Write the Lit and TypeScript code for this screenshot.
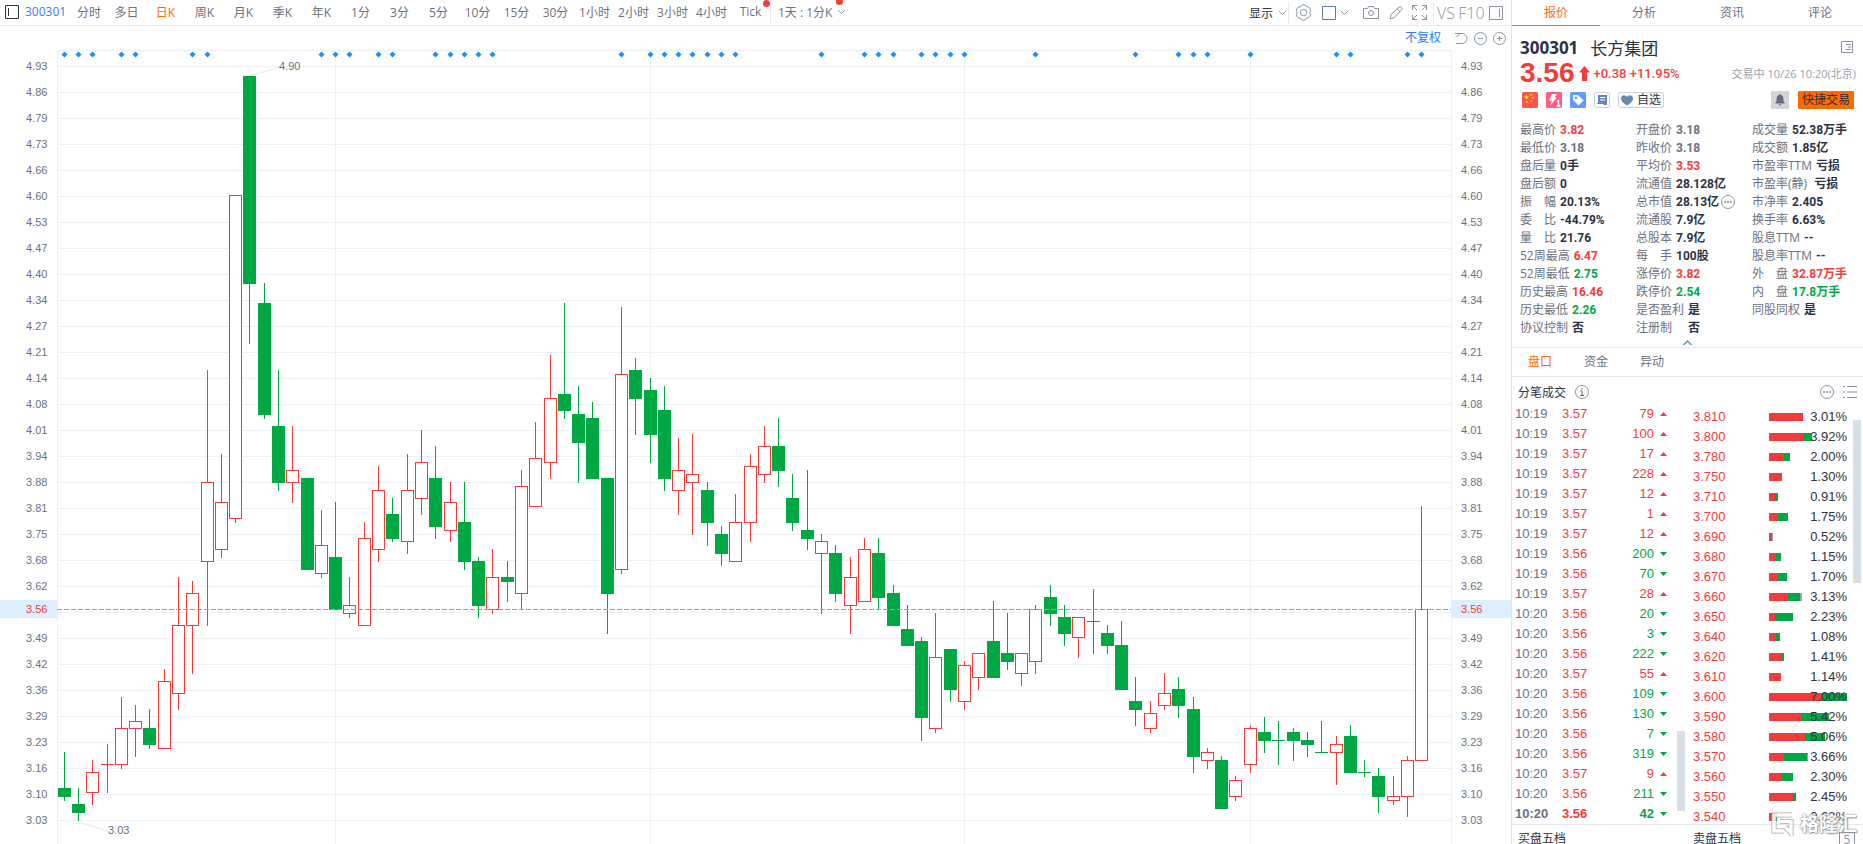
import { LitElement, html, svg, css } from "lit";
import { customElement, state } from "lit/decorators.js";
import { classMap } from "lit/directives/class-map.js";

/* Candles: [direction, wick top, body top, body bottom, wick bottom] in canvas units. */
type Candle = ["u" | "d", number, number, number, number];
const CANDLES: Candle[] = [
  ["d", 752, 788, 797, 801], ["d", 788, 804, 813, 821], ["u", 760, 772, 793, 805], ["u", 744, 764, 765, 793],
  ["u", 697, 728, 765, 769], ["u", 705, 721, 729, 757], ["d", 709, 728, 745, 749], ["u", 669, 681, 749, 749],
  ["u", 577, 625, 694, 710], ["u", 581, 593, 626, 674], ["u", 370, 482, 562, 626], ["u", 454, 502, 550, 558],
  ["u", 195, 195, 519, 523], ["d", 76, 76, 284, 344], ["d", 283, 303, 415, 419], ["d", 370, 426, 483, 491],
  ["u", 426, 470, 483, 503], ["d", 478, 478, 570, 570], ["u", 510, 545, 574, 578], ["d", 502, 557, 610, 610],
  ["u", 577, 605, 614, 618], ["u", 522, 538, 626, 626], ["u", 466, 490, 550, 562], ["d", 498, 514, 539, 542],
  ["u", 454, 490, 542, 554], ["u", 430, 462, 499, 515], ["d", 446, 478, 527, 539], ["u", 482, 502, 531, 542],
  ["d", 482, 522, 562, 570], ["d", 557, 561, 606, 618], ["u", 549, 577, 610, 614], ["d", 561, 577, 582, 602],
  ["u", 470, 486, 594, 609], ["u", 422, 458, 507, 507], ["u", 355, 398, 463, 479], ["d", 303, 394, 411, 419],
  ["d", 386, 414, 443, 483], ["d", 402, 418, 479, 479], ["d", 478, 478, 594, 634], ["u", 307, 374, 570, 574],
  ["d", 358, 370, 399, 435], ["d", 378, 390, 435, 463], ["d", 386, 410, 479, 491], ["u", 438, 470, 491, 515],
  ["u", 434, 474, 483, 535], ["d", 482, 490, 523, 546], ["d", 526, 534, 554, 566], ["u", 494, 522, 562, 562],
  ["u", 454, 466, 523, 542], ["u", 426, 446, 475, 483], ["d", 418, 446, 471, 487], ["d", 474, 498, 523, 531],
  ["d", 470, 530, 539, 550], ["u", 534, 541, 554, 614], ["d", 545, 553, 594, 602], ["u", 557, 577, 606, 634],
  ["u", 538, 549, 602, 602], ["d", 538, 553, 598, 610], ["d", 585, 593, 626, 626], ["d", 605, 629, 646, 646],
  ["d", 637, 641, 718, 741], ["u", 613, 657, 729, 733], ["d", 649, 649, 690, 702], ["u", 661, 665, 702, 710],
  ["u", 653, 653, 678, 690], ["d", 601, 641, 678, 678], ["d", 613, 653, 662, 670], ["u", 653, 653, 674, 686],
  ["u", 605, 609, 662, 674], ["d", 585, 597, 614, 626], ["d", 605, 617, 634, 646], ["u", 617, 617, 638, 658],
  ["d", 589, 621, 622, 654], ["d", 625, 633, 646, 654], ["d", 621, 645, 690, 690], ["d", 677, 701, 710, 726],
  ["u", 701, 713, 729, 733], ["u", 673, 693, 706, 710], ["d", 677, 689, 706, 718], ["d", 697, 709, 757, 773],
  ["u", 748, 752, 761, 769], ["d", 756, 760, 809, 809], ["u", 776, 780, 797, 801], ["u", 725, 728, 765, 773],
  ["d", 717, 732, 741, 753], ["d", 721, 740, 741, 765], ["d", 728, 732, 741, 761], ["d", 732, 740, 745, 757],
  ["d", 721, 752, 753, 753], ["u", 736, 744, 753, 785], ["d", 725, 736, 773, 773], ["d", 760, 772, 773, 777],
  ["d", 768, 776, 797, 813], ["u", 776, 796, 801, 805], ["u", 756, 760, 797, 817], ["u", 506, 609, 761, 761],
];
const EVENTS = [
  0, 1, 2, 4, 5, 9, 10, 18, 19, 20, 22, 23, 26, 27, 28, 29, 30, 39, 41, 42, 43, 44, 45, 46, 47, 53, 56, 57, 58,
  60, 61, 62, 63, 68, 75, 78, 79, 80, 89, 90, 94, 95,
];
const MONTHS = [19, 41, 63, 83];
const LEVELS = [
  "4.93", "4.86", "4.79", "4.73", "4.66", "4.60", "4.53", "4.47", "4.40", "4.34", "4.27", "4.21", "4.14", "4.08",
  "4.01", "3.94", "3.88", "3.81", "3.75", "3.68", "3.62", "", "3.49", "3.42", "3.36", "3.29", "3.23", "3.16",
  "3.10", "3.03",
];
const cx = (i: number) => Math.floor(64.19 + i * 14.29);

@customElement("candle-chart")
export class CandleChart extends LitElement {
  static styles = css`
    :host { display: grid; grid-template-columns: 57px 1fr 59px; font-family: "Liberation Sans", sans-serif; font-size: 11px; color: #6b7280; }
    .axis { position: relative; padding-top: 3px; }
    .level { height: 26px; line-height: 26px; padding-left: 26px; }
    .right .level { padding-left: 9px; }
    .now { position: absolute; left: 0; right: 0; top: 550px; height: 18px; line-height: 18px; padding-left: 26px; background: #ddeeff; color: #f23c39; }
    .right .now { padding-left: 9px; }
    .plot { position: relative; }
    svg { display: block; width: 100%; height: 794px; }
    .note { position: absolute; line-height: 14px; }
    .high { left: 222px; top: 9px; }
    .low { left: 51px; top: 773px; }
  `;
  private axis(side: string) {
    return html`<div class="axis ${side}">
      ${LEVELS.map((l) => html`<div class="level">${l}</div>`)}
      <div class="now">3.56</div>
    </div>`;
  }
  private candle(c: Candle, i: number) {
    const [dir, hi, top, bottom, lo] = c;
    const x = cx(i);
    const flat = bottom - top === 1;
    if (dir === "d" || flat) {
      const fill = dir === "d" ? "#00a843" : "#f23c39";
      return svg`<rect x=${x} y=${hi} width="1" height=${lo - hi} fill=${fill}></rect>
        <rect x=${x - 6} y=${top} width="13" height=${bottom - top} fill=${fill}></rect>`;
    }
    return svg`<rect x=${x} y=${hi} width="1" height=${lo - hi} fill="#f23c39"></rect>
      <rect x=${x - 5.5} y=${top + 0.5} width="12" height=${bottom - top - 1} fill="#fff" stroke="#f23c39"></rect>`;
  }
  render() {
    return html`${this.axis("left")}
      <div class="plot">
        <svg viewBox="57 50 1395 794" preserveAspectRatio="none" role="img" aria-label="300301 日K">
          <g fill="#eaf0f5">
            <rect x="57" y="50" width="1395" height="1"></rect>
            ${LEVELS.map((_, k) => svg`<rect x="57" y=${66 + k * 26} width="1395" height="1"></rect>`)}
            ${MONTHS.map((m) => svg`<rect x=${cx(m)} y="50" width="1" height="794"></rect>`)}
            <rect x="57" y="50" width="1" height="794"></rect>
            <rect x="1451" y="50" width="1" height="794"></rect>
          </g>
          <g stroke="#e3e8ee" fill="none"><path d="M250 75.500L279 67.500M79 822L108 831"></path></g>
          ${CANDLES.map((c, i) => this.candle(c, i))}
          <g fill="#1e8cff">
            ${[...EVENTS, 83].map((e) => svg`<path d="M${cx(e) + 0.5} 51.500l3 3l-3 3l-3 -3z"></path>`)}
          </g>
          <path d="M57 609.500H1451" stroke="#fa832a" stroke-dasharray="5 2" fill="none" shape-rendering="crispEdges"></path>
        </svg>
        <span class="note high">4.90</span><span class="note low">3.03</span>
      </div>
      ${this.axis("right")}`;
  }
}

const chevron = html`<svg class="chev" width="9" height="6" viewBox="0 0 9 6" fill="none" stroke="#8a94a3"><path d="M1 1l3.500 3.500L8 1"></path></svg>`;

@customElement("chart-toolbar")
export class ChartToolbar extends LitElement {
  @state() private period = "日K";
  static styles = css`
    :host { display: flex; justify-content: space-between; height: 25px; border-bottom: 1px solid #e5e8ec; overflow: hidden; }
    button { all: unset; box-sizing: border-box; cursor: pointer; display: flex; align-items: center; justify-content: center; position: relative; white-space: nowrap; }
    svg { display: block; flex: none; }
    .left { display: grid; grid-template-columns: 24px 47px 36px 39px repeat(16, 39px) 2px 90px; }
    .left button { height: 23px; color: #6b7280; }
    .left .code { color: #3d7eff; justify-content: start; padding-left: 1px; }
    .left .on { color: #ff6a00; }
    .split { background: #e5e8ec; width: 1px; height: 20px; margin-top: 3px; }
    .dot { position: absolute; width: 7px; height: 7px; border-radius: 50%; background: #f23c39; right: 0; top: 0; }
    .span .dot { right: 19px; top: -2px; }
    .left .span { height: 24px; justify-content: start; padding-left: 6px; gap: 5px; }
    .right { display: grid; grid-template-columns: 40px 29px 38px 30px 20px 28px 24px 27px 26px; align-items: center; }
    .right button { height: 21px; }
    .right .show { color: #2b3345; gap: 5px; justify-content: start; border-right: 1px solid #e5e8ec; }
    .right .box { gap: 4px; justify-content: start; padding-left: 4px; }
    .edge { border-right: 1px solid #e5e8ec; }
    .right .word { color: #8a94a3; font-size: 16px; font-weight: 300; }
    .right .pane { padding-right: 4px; }
  `;
  render() {
    const periods = ["分时", "多日", "日K", "周K", "月K", "季K", "年K", "1分", "3分", "5分", "10分", "15分", "30分", "1小时", "2小时", "3小时", "4小时", "Tick"];
    return html`<div class="left">
        <button aria-label="侧栏"><svg width="14" height="14" viewBox="0 0 14 14" fill="none" stroke="#2b3345"><path d="M.5.5h13v13H.5zM3.500 3v8"></path></svg></button>
        <button class="code">300301</button>
        ${periods.map((p) => html`<button class=${classMap({ on: p === this.period })} @click=${() => (this.period = p)}>${p}${p === "Tick" ? html`<i class="dot"></i>` : ""}</button>`)}
        <span class="split"></span>
        <button class="span">1天 : 1分K${chevron}<i class="dot"></i></button>
      </div>
      <div class="right">
        <button class="show">显示${chevron}</button>
        <button aria-label="设置"><svg width="17" height="17" viewBox="0 0 17 17" fill="none" stroke="#8a94a3"><path d="M6.500 1.200q2-.8 4 0l1.200 1.600 2 .3q1.600 1.300 1.900 3.300l-.8 2 .8 2.200q-.3 2-1.900 3.200l-2 .3-1.200 1.700q-2 .8-4 0l-1.200-1.700-2-.3Q1.700 12.600 1.400 10.600l.8-2.200-.8-2q.3-2 1.900-3.300l2-.3z"></path><circle cx="8.500" cy="8.500" r="3.200"></circle></svg></button>
        <button class="box" aria-label="画框"><svg width="14" height="14" viewBox="0 0 14 14" fill="none" stroke="#5b7da8"><path d="M.5.5h13v13H.5z"></path></svg>${chevron}</button>
        <button aria-label="截图"><svg width="16" height="13" viewBox="0 0 16 13" fill="none" stroke="#8a94a3"><path d="M.5 2.500h4l1.200-2h4.600l1.200 2h4v10H.5z"></path><circle cx="8" cy="7" r="2.500"></circle></svg></button>
        <button aria-label="画笔"><svg width="14" height="14" viewBox="0 0 14 14" fill="none" stroke="#8a94a3"><path d="M1 13l1-4.500L10 1.200q1.500-.8 2.500.3t.2 2.400L5 11.800zM8 3l3 3"></path></svg></button>
        <button class="edge" aria-label="全屏"><svg width="15" height="15" viewBox="0 0 15 15" fill="none" stroke="#8a94a3"><path d="M.5 5V.5H5M.5.5L5 5M10 .5h4.500V5M14.500.5L10 5M.5 10v4.500H5M.5 14.500L5 10M10 14.500h4.500V10M14.500 14.500L10 10"></path></svg></button>
        <button class="word">VS</button>
        <button class="word">F10</button>
        <button class="pane" aria-label="面板"><svg width="14" height="14" viewBox="0 0 14 14" fill="none" stroke="#8a94a3"><path d="M.5.5h13v13H.5zM10.500 3v8"></path></svg></button>
      </div>`;
  }
}

type Stat = [string, string, string?];
const STATS: Stat[] = [
  ["最高价", "3.82", "up"], ["开盘价", "3.18", "flat"], ["成交量", "52.38万手"],
  ["最低价", "3.18", "flat"], ["昨收价", "3.18", "flat"], ["成交额", "1.85亿"],
  ["盘后量", "0手"], ["平均价", "3.53", "up"], ["市盈率TTM", "亏损"],
  ["盘后额", "0"], ["流通值", "28.128亿"], ["市盈率(静) ", "亏损"],
  ["振　幅", "20.13%"], ["总市值", "28.13亿", "more"], ["市净率", "2.405"],
  ["委　比", "-44.79%"], ["流通股", "7.9亿"], ["换手率", "6.63%"],
  ["量　比", "21.76"], ["总股本", "7.9亿"], ["股息TTM", "--"],
  ["52周最高", "6.47", "up"], ["每　手", "100股"], ["股息率TTM", "--"],
  ["52周最低", "2.75", "down"], ["涨停价", "3.82", "up"], ["外　盘", "32.87万手", "up"],
  ["历史最高", "16.46", "up"], ["跌停价", "2.54", "down"], ["内　盘", "17.8万手", "down"],
  ["历史最低", "2.26", "down"], ["是否盈利", "是"], ["同股同权", "是"],
  ["协议控制", "否"], ["注册制　", "否"],
];
const TICKS: [string, string, number, boolean][] = [
  ["10:19", "3.57", 79, true], ["10:19", "3.57", 100, true], ["10:19", "3.57", 17, true], ["10:19", "3.57", 228, true],
  ["10:19", "3.57", 12, true], ["10:19", "3.57", 1, true], ["10:19", "3.57", 12, true], ["10:19", "3.56", 200, false],
  ["10:19", "3.56", 70, false], ["10:19", "3.57", 28, true], ["10:20", "3.56", 20, false], ["10:20", "3.56", 3, false],
  ["10:20", "3.56", 222, false], ["10:20", "3.57", 55, true], ["10:20", "3.56", 109, false], ["10:20", "3.56", 130, false],
  ["10:20", "3.56", 7, false], ["10:20", "3.56", 319, false], ["10:20", "3.57", 9, true], ["10:20", "3.56", 211, false],
  ["10:20", "3.56", 42, false],
];
/* [price, buy width, sell width, neutral width, share] */
const DEPTH: [string, number, number, number, string][] = [
  ["3.810", 34, 0, 0, "3.01%"], ["3.800", 34, 9, 0, "3.92%"], ["3.780", 15, 6, 0, "2.00%"], ["3.750", 13, 0, 0, "1.30%"],
  ["3.710", 6, 3, 0, "0.91%"], ["3.700", 9, 10, 0, "1.75%"], ["3.690", 3, 0, 1, "0.52%"], ["3.680", 7, 5, 0, "1.15%"],
  ["3.670", 9, 9, 0, "1.70%"], ["3.660", 19, 12, 2, "3.13%"], ["3.650", 6, 18, 0, "2.23%"], ["3.640", 7, 4, 0, "1.08%"],
  ["3.620", 13, 2, 0, "1.41%"], ["3.610", 12, 0, 0, "1.14%"], ["3.600", 52, 26, 0, "7.00%"], ["3.590", 32, 28, 0, "5.42%"],
  ["3.580", 36, 20, 0, "5.06%"], ["3.570", 15, 23, 1, "3.66%"], ["3.560", 12, 12, 0, "2.30%"], ["3.550", 24, 3, 0, "2.45%"],
  ["3.540", 5, 3, 0, "0.68%"],
];

const dots = html`<svg width="14" height="14" viewBox="0 0 14 14" fill="none" stroke="#8a94a3"><circle cx="7" cy="7" r="6.500"></circle><path d="M3 7h2M6 7h2M9 7h2" stroke-width="1.500"></path></svg>`;

@customElement("quote-panel")
export class QuotePanel extends LitElement {
  @state() private tab = "报价";
  @state() private sub = "盘口";
  static styles = css`
    :host { display: block; border-left: 1px solid #dfe3e8; box-sizing: border-box; color: #2b3345; background: #fff; }
    button { all: unset; box-sizing: border-box; cursor: pointer; text-align: center; white-space: nowrap; }
    svg { display: block; flex: none; }
    .tabs { display: grid; grid-template-columns: repeat(4, 88px); border-bottom: 1px solid #e5e8ec; height: 25px; }
    .tabs button { height: 26px; line-height: 22px; color: #6b7280; }
    .tabs .on { color: #ff6a00; border-bottom: 1px solid #ff6a00; }
    .head { padding: 9px 7px 0 8px; }
    .row { display: flex; align-items: center; }
    .name { height: 24px; font-size: 17px; gap: 12px; padding-right: 3px; }
    .name b { font-weight: 700; }
    .push { margin-left: auto; }
    .quote { height: 28px; color: #f23c39; font-weight: 500; font-size: 13px; font-family: Roboto, sans-serif; }
    .last { font: 700 28px/28px "Liberation Sans", sans-serif; }
    .quote svg { margin: 0 4px; }
    .time { margin-left: auto; color: #9aa1ac; font: 11px "Open Sans", "Noto Sans CJK SC", sans-serif; white-space: nowrap; }
    .badges { height: 26px; gap: 8px; padding-left: 2px; padding-right: 2px; }
    .fav { display: flex; align-items: center; gap: 4px; height: 16px; width: 46px; justify-content: center; border: 1px solid #c9d3de; border-radius: 2px; line-height: 14px; }
    .bell { display: grid; place-items: center; width: 18px; height: 18px; background: #d2d4da; margin-left: auto; }
    .trade { width: 56px; height: 18px; line-height: 18px; background: #ff6a00; border-radius: 1px; margin-left: 1px; color: #2b3345; }
    .stats { display: grid; grid-template-columns: repeat(3, 116px); margin: 8px 0 0; padding-left: 8px; }
    .stat { display: flex; height: 18px; line-height: 18px; gap: 4px; white-space: pre; color: #6b7280; }
    .stat dd { margin: 0; font-family: Roboto, "Noto Sans CJK SC", sans-serif; font-weight: 700; color: #2b3345; display: flex; align-items: center; gap: 2px; }
    .stat .flat { color: #6b7280; }
    .up, .stat .up { color: #f23c39; }
    .down, .stat .down { color: #00a843; }
    .fold { display: block; height: 11px; width: 100%; border-bottom: 1px solid #e5e8ec; }
    .fold svg { margin: 2px auto 0; width: 9px; }
    .subs { display: flex; height: 28px; border-bottom: 1px solid #e5e8ec; }
    .subs button { width: 56px; line-height: 28px; color: #6b7280; }
    .subs .on { color: #ff6a00; }
    .title { height: 27px; padding: 3px 6px 0; box-sizing: border-box; gap: 9px; }
    .title .push { display: flex; gap: 9px; }
    .lists { display: flex; height: 420px; font: 13px "Liberation Sans", sans-serif; border-bottom: 1px solid #e5e8ec; overflow: hidden; }
    table { border-collapse: collapse; table-layout: fixed; }
    td { padding: 0; height: 20px; line-height: 20px; }
    .ticks { width: 165px; height: 420px; flex: none; }
    .ticks .t { width: 47px; padding-left: 3px; color: #6b7280; }
    .ticks .p { width: 47px; }
    .ticks .v { text-align: right; }
    .ticks .a { width: 23px; padding-left: 6px; box-sizing: border-box; }
    .ticks tr:last-child { font-weight: 700; }
    .depth { width: 154px; height: 420px; margin-left: 8px; margin-top: 3px; flex: none; }
    .depth .p { width: 76px; color: #f23c39; }
    .depth .s { position: relative; text-align: right; }
    .bar { position: absolute; left: 0; top: 6px; height: 8px; display: flex; }
    .bar i { height: 8px; }
    .buy { background: #f23c39; }
    .sell { background: #00a843; }
    .mid { background: #9aa1ac; }
    .pct { position: relative; }
    .thumb { width: 8px; background: #d8dfe8; flex: none; }
    .thumb.one { height: 80px; margin-top: 327px; }
    .thumb.two { height: 163px; margin-top: 16px; margin-left: 6px; }
    .books { display: grid; grid-template-columns: 175px 1fr 24px; padding: 5px 0 0 6px; line-height: 18px; }
    .five { box-sizing: border-box; width: 16px; height: 16px; margin-top: 2px; border: 1px solid #8a94a3; color: #8a94a3; line-height: 14px; text-align: center; }
    .brand { position: absolute; right: 6px; bottom: 5px; display: flex; align-items: center; gap: 5px; color: #fff; opacity: .85; font-size: 19px; font-weight: 700; line-height: 30px; text-shadow: 0 0 2px #888, 0 0 2px #888, 1px 1px 1px #999; }
  `;
  render() {
    return html`<nav class="tabs">
        ${["报价", "分析", "资讯", "评论"].map((t) => html`<button class=${classMap({ on: t === this.tab })} @click=${() => (this.tab = t)}>${t}</button>`)}
      </nav>
      <section class="head">
        <div class="row name"><b>300301</b><span>长方集团</span>
          <svg class="push" width="12" height="12" viewBox="0 0 12 12" fill="none" stroke="#8a94a3"><path d="M.5.5h11v11H.5zM5 3.500h5M7 6h3M5 8.500h5"></path></svg></div>
        <div class="row quote"><span class="last">3.56</span>
          <svg width="11" height="15" viewBox="0 0 11 15" fill="#f23c39"><path d="M5.500 0L11 6.500H8V15H3V6.500H0z"></path></svg>
          <span>+0.38 +11.95%</span><span class="time">交易中 10/26 10:20(北京)</span></div>
        <div class="row badges">
          <svg width="16" height="16" viewBox="0 0 16 16"><rect width="16" height="16" rx="1.500" fill="#f95650"></rect><path d="M4.500 2.500l.7 1.700 1.800.1-1.400 1.200.5 1.800-1.600-1-1.600 1 .5-1.800L2 4.300l1.800-.1zM8.500 2h1.600v1.500H8.500zM10 5h1.500v1.500H10zM8.500 8H10v1.500H8.500zM4 9h1.500v1.500H4z" fill="#ffe600"></path></svg>
          <svg width="16" height="16" viewBox="0 0 16 16"><rect width="16" height="16" rx="1.500" fill="#ff5c85"></rect><path d="M6 2h5L8.500 5.500H11L4 13.500l1.800-5H3z" fill="#fff"></path><path d="M11 9.500l1.500-1V14M10.500 14h4" stroke="#fff" stroke-width="1.400" fill="none"></path></svg>
          <svg width="16" height="16" viewBox="0 0 16 16"><rect width="16" height="16" rx="1.500" fill="#5c9dff"></rect><path d="M3.500 3.500h4.500l5 5-4.500 4.500-5-5z" fill="#fff" stroke="#fff" stroke-linejoin="round"></path><circle cx="6" cy="6" r="1.300" fill="#5c9dff"></circle></svg>
          <svg width="16" height="16" viewBox="0 0 16 16"><rect x=".5" y=".5" width="15" height="15" rx="1.500" fill="#fff" stroke="#c9d3de"></rect><path d="M4 3h9v10h-3l-1-1H3v-1h1z" fill="#6889ad"></path><path d="M6 5.500h5M6 8h5" stroke="#fff"></path></svg>
          <button class="fav"><svg width="12" height="11" viewBox="0 0 12 11" fill="#6889ad"><path d="M6 10.500C2 8 0 5.800 0 3.400 0 1.500 1.400.3 3 .3c1.300 0 2.400.7 3 1.800C6.600 1 7.700.3 9 .3c1.600 0 3 1.200 3 3.100 0 2.400-2 4.600-6 7.100z"></path></svg>自选</button>
          <button class="bell" aria-label="提醒"><svg width="10" height="12" viewBox="0 0 10 12" fill="#646b78"><path d="M4.300 0h1.400v1C7.600 1.400 8.500 3 8.500 5v2.500L10 9.500H0l1.500-2V5c0-2 .9-3.600 2.800-4zM3.500 10.200h3L5 11.700z"></path></svg></button>
          <button class="trade">快捷交易</button>
        </div>
      </section>
      <dl class="stats">
        ${STATS.map(([k, v, tone]) => html`<div class="stat"><dt>${k}</dt><dd class=${tone ?? ""}>${v}${tone === "more" ? dots : ""}</dd></div>`)}
      </dl>
      <button class="fold" aria-label="收起"><svg width="9" height="6" viewBox="0 0 9 6" fill="none" stroke="#6889ad" stroke-width="1.300"><path d="M.5 5l4-4 4 4"></path></svg></button>
      <nav class="subs">
        ${["盘口", "资金", "异动"].map((t) => html`<button class=${classMap({ on: t === this.sub })} @click=${() => (this.sub = t)}>${t}</button>`)}
      </nav>
      <div class="row title"><span>分笔成交</span>
        <svg width="14" height="14" viewBox="0 0 14 14" fill="none" stroke="#8a94a3"><circle cx="7" cy="7" r="6.500"></circle><path d="M7 3v1.500M5.500 6H7v4M5 10.500h4" stroke="#5b6472"></path></svg>
        <span class="push">${dots}<svg width="14" height="14" viewBox="0 0 14 14" fill="none" stroke="#8a94a3"><path d="M0 1.500h2M4 1.500h10M0 7h2M4 7h10M0 12.500h2M4 12.500h10"></path></svg></span></div>
      <div class="lists">
        <table class="ticks"><tbody>
          ${TICKS.map(([t, p, v, up]) => html`<tr>
            <td class="t">${t}</td><td class="p up">${p}</td><td class="v ${up ? "up" : "down"}">${v}</td>
            <td class="a"><svg width="7" height="4" viewBox="0 0 7 4" fill=${up ? "#f23c39" : "#00a843"}><path d=${up ? "M3.500 0L7 4H0z" : "M3.500 4L7 0H0z"}></path></svg></td>
          </tr>`)}
        </tbody></table>
        <i class="thumb one"></i>
        <table class="depth"><tbody>
          ${DEPTH.map(([p, b, s, n, pct]) => html`<tr>
            <td class="p">${p}</td>
            <td class="s"><span class="bar"><i class="buy" style="width:${b}px"></i><i class="sell" style="width:${s}px"></i><i class="mid" style="width:${n}px"></i></span><span class="pct">${pct}</span></td>
          </tr>`)}
        </tbody></table>
        <i class="thumb two"></i>
      </div>
      <div class="books"><span>买盘五档</span><span>卖盘五档</span><span class="five">5</span></div>
      <div class="brand"><svg width="24" height="24" viewBox="0 0 24 24"><g fill="none" stroke="#999" stroke-width="5"><path d="M21 3H3v16h10M9 9.500h11V21l-6-6"></path></g><g fill="none" stroke="#fff" stroke-width="3.500"><path d="M21 3H3v16h10M9 9.500h11V21l-6-6"></path></g></svg>格隆汇</div>`;
  }
}

@customElement("app-root")
export class AppRoot extends LitElement {
  static styles = css`
    :host { display: grid; grid-template-columns: 1fr 352px; height: 100vh; overflow: hidden; position: relative; background: #fff; font: 12px "Open Sans", "Noto Sans CJK SC", sans-serif; }
    quote-panel { min-width: 0; }
    .tools { display: flex; justify-content: flex-end; align-items: center; gap: 6px; height: 24px; padding-right: 5px; }
    .tools button { all: unset; cursor: pointer; display: block; }
    .tools .adjust { color: #2e7bff; margin-right: 8px; line-height: 24px; }
    .tools svg { display: block; }
  `;
  render() {
    return html`<main>
        <chart-toolbar></chart-toolbar>
        <div class="tools">
          <button class="adjust">不复权</button>
          <button aria-label="还原"><svg width="13" height="13" viewBox="0 0 13 13" fill="none" stroke="#8a94a3"><path d="M0 1.500h7a5 5 0 0 1 0 10H1M0 1.500h5L1.500 5"></path></svg></button>
          <button aria-label="缩小"><svg width="13" height="13" viewBox="0 0 13 13" fill="none" stroke="#8a94a3"><circle cx="6.500" cy="6.500" r="6"></circle><path d="M4 6.500h5"></path></svg></button>
          <button aria-label="放大"><svg width="13" height="13" viewBox="0 0 13 13" fill="none" stroke="#8a94a3"><circle cx="6.500" cy="6.500" r="6"></circle><path d="M4 6.500h5M6.500 4v5"></path></svg></button>
        </div>
        <candle-chart></candle-chart>
      </main>
      <quote-panel></quote-panel>`;
  }
}
